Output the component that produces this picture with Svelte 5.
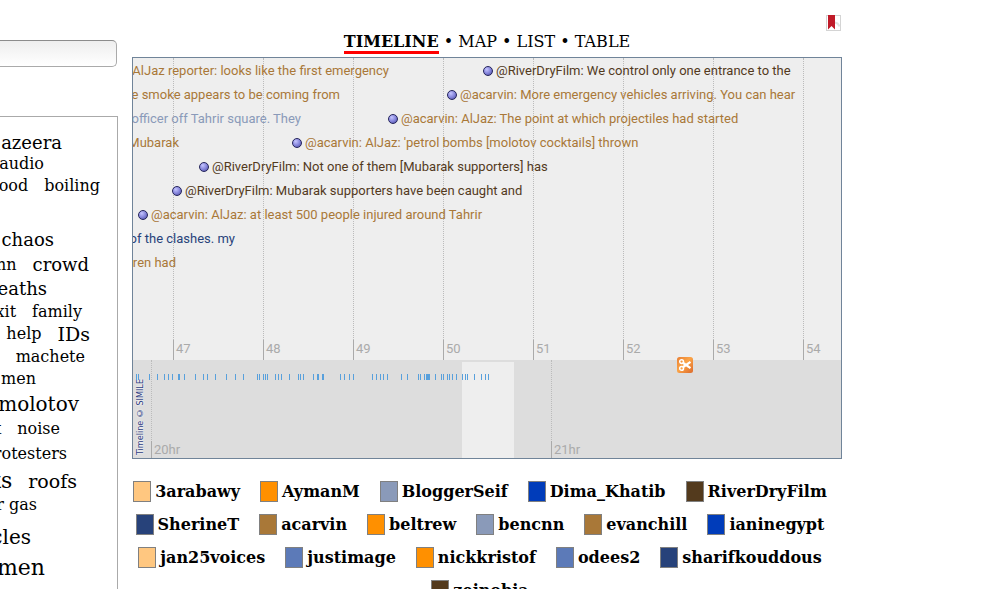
<script>
  const cloud = [
    { size: 18, height: 20, inset: 55, words: ['Aljazeera'] },
    { size: 16, height: 22, inset: 73, words: ['audio'] },
    { size: 16, height: 22, inset: 17, words: ['blood', 'boiling'] },
    { size: 18, height: 30, inset: 150, words: [] },
    { size: 18, height: 26, inset: 63, words: ['chaos'] },
    { size: 18, height: 24, inset: 28, words: ['cnn', 'crowd'], first: 16 },
    { size: 18, height: 24, inset: 70, words: ['deaths'] },
    { size: 16, height: 22, inset: 35, words: ['exit', 'family'] },
    { size: 19, height: 22, inset: 27, words: ['help', 'IDs'], first: 16 },
    { size: 16, height: 24, inset: 32, words: ['looters', 'machete'], sky: true },
    { size: 16, height: 20, inset: 81, words: ['men'] },
    { size: 20, height: 30, inset: 38, words: ['molotov'] },
    { size: 16, height: 20, inset: 57, words: ['neck', 'noise'] },
    { size: 16, height: 30, inset: 50, words: ['protesters'] },
    { size: 19, height: 24, inset: 40, words: ['rocks', 'roofs'], first: 22 },
    { size: 16, height: 24, inset: 80, words: ['tear gas'] },
    { size: 20, height: 40, inset: 86, words: ['vehicles'] },
    { size: 22, height: 22, inset: 72, words: ['women'] }
  ];

  const tan = '#a97838', brown = '#533a1d', steel = '#8a9ab9', navy = '#27427a';

  const events = [
    { x: 350, row: 0, color: brown, text: '@RiverDryFilm: We control only one entrance to the' },
    { x: 314, row: 1, color: tan, text: '@acarvin: More emergency vehicles arriving. You can hear' },
    { x: 255, row: 2, color: tan, text: '@acarvin: AlJaz: The point at which projectiles had started' },
    { x: 159, row: 3, color: tan, text: "@acarvin: AlJaz: 'petrol bombs [molotov cocktails] thrown" },
    { x: 66, row: 4, color: brown, text: '@RiverDryFilm: Not one of them [Mubarak supporters] has' },
    { x: 39, row: 5, color: brown, text: '@RiverDryFilm: Mubarak supporters have been caught and' },
    { x: 5, row: 6, color: tan, text: '@acarvin: AlJaz: at least 500 people injured around Tahrir' }
  ];

  const leaving = [
    { end: 256, row: 0, color: tan, text: 'AlJaz reporter: looks like the first emergency' },
    { end: 207, row: 1, color: tan, text: 'the smoke appears to be coming from' },
    { end: 168, row: 2, color: steel, text: 'officer off Tahrir square. They' },
    { end: 46, row: 3, color: tan, text: 'Mubarak' },
    { end: 102, row: 7, color: navy, text: 'of the clashes. my' },
    { end: 43, row: 8, color: tan, text: 'children had' }
  ];

  const minutes = [47, 48, 49, 50, 51, 52, 53, 54].map((label, i) => ({ label, x: 40 + i * 90 }));
  const hours = [{ label: '20hr', x: 18 }, { label: '21hr', x: 418 }];

  const ticks = [
    3, 5, 16, 24, 31, 35, 39, 45, 46, 51, 62, 70, 74, 82, 93, 102, 110, 124, 126, 130, 132, 134,
    142, 145, 148, 156, 165, 167, 170, 180, 184, 185, 189, 190, 207, 211, 216, 220, 239, 243, 247,
    250, 254, 268, 274, 285, 287, 291, 293, 294, 295, 296, 302, 308, 310, 314, 316, 319, 323, 329,
    332, 334, 341, 348, 352, 355
  ];

  const people = [
    ['3arabawy', '#ffc780'], ['AymanM', '#ff9000'], ['BloggerSeif', '#8a9ab9'],
    ['Dima_Khatib', '#003cba'], ['RiverDryFilm', '#533a1d'], ['SherineT', '#27427a'],
    ['acarvin', '#a97838'], ['beltrew', '#ff9000'], ['bencnn', '#8a9ab9'],
    ['evanchill', '#a97838'], ['ianinegypt', '#003cba'], ['jan25voices', '#ffc780'],
    ['justimage', '#5c7ab8'], ['nickkristof', '#ff9000'], ['odees2', '#5c7ab8'],
    ['sharifkouddous', '#27427a'], ['zeinobia', '#533a1d']
  ];
</script>

<div class="page">
  <aside>
    <input class="search" type="text" aria-label="Search" />
    <div class="cloud">
      {#each cloud as line}
        <div class="line" style:font-size="{line.size}px" style:height="{line.height}px" style:padding-right="{line.inset}px">
          {#each line.words as word, i}
            <a
              href="#tag"
              class:sky={line.sky && i === 0}
              style:font-size={i === 0 && line.first ? `${line.first}px` : null}>{word}</a>
          {/each}
        </div>
      {/each}
    </div>
  </aside>

  <main>
    <div class="tools">
      <button class="bookmark" aria-label="Bookmark">
        <svg width="16" height="17" viewBox="0 0 16 17">
          <rect x=".5" y=".5" width="14" height="15" fill="#fff" stroke="#d4d4d4" />
          <path d="M9 7.500c2 .2 3.500 1.500 4.500 4" fill="none" stroke="#e2e2e2" stroke-width="2" />
          <path d="M2 0h7v14.500l-3.500-3.500L2 14.500z" fill="#c01a28" />
        </svg>
      </button>
    </div>
    <nav>
      <a class="current" href="#timeline">TIMELINE</a> • <a href="#map">MAP</a> • <a href="#list">LIST</a> • <a href="#table">TABLE</a>
    </nav>

    <section class="timeline" aria-label="Timeline">
      <div class="band detail">
        {#each minutes as m}
          <div class="mark" style:left="{m.x}px"><span>{m.label}</span></div>
        {/each}
        {#each leaving as e}
          <div class="event ending" style:top="{e.row * 24}px" style:width="{e.end}px" style:color={e.color}><span>{e.text}</span></div>
        {/each}
        {#each events as e}
          <div class="event" style:top="{e.row * 24}px" style:left="{e.x}px" style:color={e.color}>
            <i class="dot"></i><span>{e.text}</span>
          </div>
        {/each}
      </div>
      <div class="band overview">
        <div class="window"></div>
        {#each hours as h}
          <div class="mark" style:left="{h.x}px"><span>{h.label}</span></div>
        {/each}
        <a class="credit" href="#simile">Timeline © SIMILE</a>
        {#each ticks as x}
          <i class="tick" style:left="{x}px"></i>
        {/each}
        <svg class="clip" width="16" height="16" viewBox="0 0 16 16">
          <defs>
            <linearGradient id="clip-fill" x1="0" y1="0" x2="1" y2="1">
              <stop offset="0" stop-color="#e87f35" />
              <stop offset=".45" stop-color="#fba447" />
              <stop offset="1" stop-color="#dc6a2c" />
            </linearGradient>
          </defs>
          <rect width="16" height="16" rx="2.500" fill="url(#clip-fill)" />
          <g fill="none" stroke="#fff">
            <circle cx="4.600" cy="4.600" r="1.900" stroke-width="1.500" />
            <circle cx="4.600" cy="11.400" r="1.900" stroke-width="1.500" />
            <path d="M6.200 6 13.500 11.200M6.200 10 13.500 4.800" stroke-width="2.200" />
          </g>
        </svg>
      </div>
    </section>

    <ul class="legend">
      {#each people as [name, color]}
        <li><span class="swatch" style:background={color}></span>{name}</li>
      {/each}
    </ul>
  </main>
</div>

<style>
  :global(body) {
    background: #fff;
  }
  .page {
    display: flex;
    gap: 14px;
    height: 100vh;
    overflow: hidden;
    color: #000;
    font: 16px/20px 'DejaVu Serif', serif;
  }
  a {
    color: inherit;
    text-decoration: none;
  }
  aside {
    flex: 0 0 268px;
    margin-left: -150px;
    display: flex;
    flex-direction: column;
    padding-top: 40px;
    box-sizing: border-box;
  }
  .search {
    box-sizing: border-box;
    height: 27px;
    margin: 0 1px 49px 0;
    padding: 2px 8px;
    border: 1px solid #aaa;
    border-top-color: #8c8c8c;
    border-radius: 5px;
    background: linear-gradient(#eee, #fff);
    font: inherit;
    flex: none;
  }
  .cloud {
    flex: 1 0 auto;
    border: 1px solid #aaa;
    padding-top: 16px;
    padding-bottom: 60px;
  }
  .line {
    display: flex;
    justify-content: flex-end;
    align-items: center;
    gap: 16px;
    white-space: nowrap;
    box-sizing: border-box;
  }
  .sky {
    color: #5fb8e8;
  }
  main {
    flex: 0 1 710px;
    min-width: 0;
  }
  .tools {
    display: flex;
    justify-content: flex-end;
    height: 32px;
    padding-top: 15px;
    box-sizing: border-box;
  }
  .bookmark {
    display: block;
    padding: 0;
    border: 0;
    background: none;
    height: 17px;
  }
  .bookmark svg {
    display: block;
  }
  nav {
    height: 25px;
    text-align: center;
    white-space: nowrap;
  }
  nav .current {
    display: inline-block;
    line-height: 19px;
    font-weight: bold;
    border-bottom: 3px solid #f00;
  }
  .timeline {
    border: 1px solid #708499;
    font: 13px/20px Roboto, sans-serif;
    overflow: hidden;
  }
  .band {
    position: relative;
  }
  .detail {
    height: 302px;
    background: #eee;
  }
  .overview {
    height: 98px;
    background: #ddd;
  }
  .mark {
    position: absolute;
    top: 0;
    bottom: 0;
    display: flex;
    align-items: flex-end;
    color: #aaa;
    border-left: 1px dotted #bbb;
  }
  .mark span {
    margin-left: -1px;
    padding-left: 2px;
    border-left: 1px solid #aaa;
    height: 20px;
    line-height: 18px;
  }
  .overview .mark span {
    height: 17px;
  }
  .event {
    position: absolute;
    display: flex;
    align-items: center;
    gap: 3px;
    height: 26px;
    white-space: nowrap;
  }
  .event span {
    padding-bottom: 1px;
  }
  .ending {
    justify-content: flex-end;
  }
  .dot {
    width: 10px;
    height: 10px;
    box-sizing: border-box;
    border: 1px solid #24245c;
    border-radius: 50%;
    background: radial-gradient(circle at 35% 30%, #c4c4ff, #8080d8 55%, #4a4a94);
  }
  .window {
    position: absolute;
    left: 329px;
    top: 2px;
    bottom: 0;
    width: 52px;
    background: #eee;
  }
  .tick {
    position: absolute;
    top: 14px;
    width: 1px;
    height: 6px;
    background: #58a0dc;
  }
  .credit {
    position: absolute;
    left: 1px;
    bottom: 3px;
    writing-mode: vertical-rl;
    transform: rotate(180deg);
    color: #2c3c80;
    font: 9px/12px 'DejaVu Sans Condensed', 'DejaVu Sans', sans-serif;
    text-shadow: 0 0 2px #fff, 0 0 2px #fff;
  }
  .clip {
    position: absolute;
    left: 544px;
    top: -3px;
  }
  .legend {
    display: flex;
    flex-wrap: wrap;
    justify-content: center;
    gap: 10px 20px;
    margin: 21px 0 0;
    padding: 0 14px 60px 0;
    list-style: none;
    font-weight: bold;
  }
  .legend li {
    display: flex;
    align-items: center;
    gap: 4px;
    height: 23px;
  }
  .swatch {
    width: 16px;
    height: 19px;
    border: 1px solid #808080;
  }
</style>
